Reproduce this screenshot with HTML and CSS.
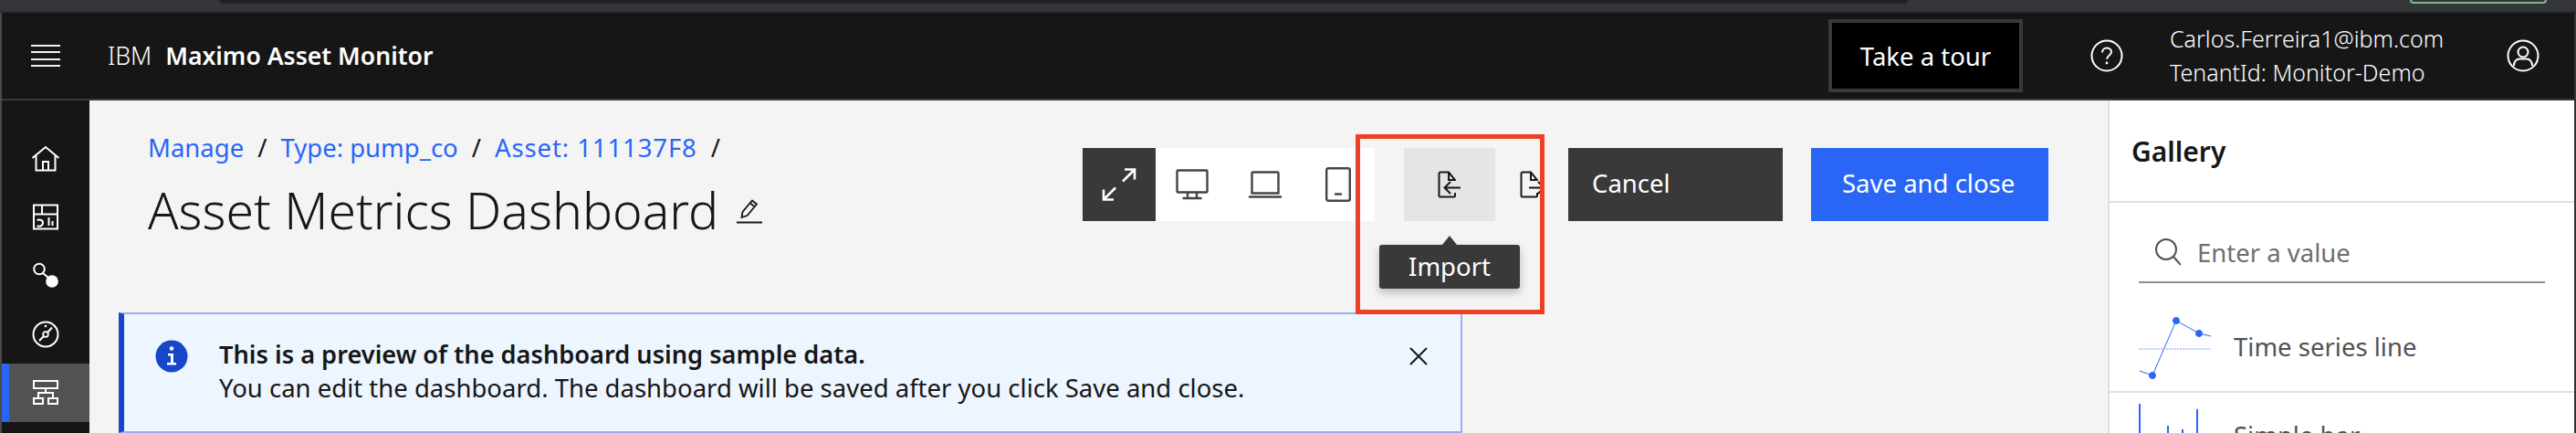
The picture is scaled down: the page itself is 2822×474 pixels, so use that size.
FILE: index.html
```html
<!DOCTYPE html>
<html lang="en">
<head>
    <meta charset="UTF-8">
    <title>Asset Metrics Dashboard</title>
    <link rel="stylesheet" href="styles.css">
</head>
<body>
    <div class="browser-strip">
        <div class="browser-tab"></div>
        <div class="browser-pill"></div>
    </div>
    <div class="app">
        <header class="top-bar">
            <div class="hamburger"><span></span><span></span><span></span><span></span></div>
            <div class="brand">IBM <b>Maximo Asset Monitor</b></div>
            <button class="tour-btn">Take a tour</button>
            <svg class="help-icon" width="36" height="36" viewBox="0 0 36 36" fill="none" stroke="#fff" stroke-width="2">
                <circle cx="18" cy="18" r="16.5"/>
                <path d="M13 14.5c0-3 2.2-5 5-5s5 2 5 4.6c0 3.6-5 3.6-5 7.6"/>
                <circle cx="18" cy="26" r="1.4" fill="#fff" stroke="none"/>
            </svg>
            <div class="user-info">
                <div>Carlos.Ferreira1@ibm.com</div>
                <div>TenantId: Monitor-Demo</div>
            </div>
            <svg class="user-icon" width="36" height="36" viewBox="0 0 36 36" fill="none" stroke="#fff" stroke-width="2">
                <circle cx="18" cy="18" r="16.5"/>
                <circle cx="18" cy="14" r="5.5"/>
                <path d="M8 29c0-5 3-7.5 6-7.5h8c3 0 6 2.5 6 7.5"/>
            </svg>
        </header>
        <div class="workspace">
            <nav class="side-nav">
                <div class="nav-item">
                    <svg width="32" height="32" viewBox="0 0 32 32" fill="none" stroke="#fff" stroke-width="2">
                        <path d="M1.5 15L16 3l14.5 12M5.5 12v16.5h21V12M13 28.5V19h6v9.5"/>
                    </svg>
                </div>
                <div class="nav-item">
                    <svg width="32" height="32" viewBox="0 0 32 32" fill="none" stroke="#fff" stroke-width="2">
                        <path d="M3 2.5h26v26H3zM3 12.5h26M12 2.5v10M6.5 19c4-1.500 7 .5 6.5 3.5s-4 4-6.5 2.5M19.5 16v9M23.5 20v5"/>
                    </svg>
                </div>
                <div class="nav-item">
                    <svg width="32" height="32" viewBox="0 0 32 32" fill="none" stroke="#fff" stroke-width="2">
                        <circle cx="9" cy="8.5" r="5.8"/>
                        <path d="M13 13l6 5"/>
                        <circle cx="23" cy="22" r="6.8" fill="#fff" stroke="none"/>
                    </svg>
                </div>
                <div class="nav-item">
                    <svg width="32" height="32" viewBox="0 0 32 32" fill="none" stroke="#fff" stroke-width="2">
                        <circle cx="16" cy="16" r="13.5"/>
                        <path d="M9 23l5-5M18 14l5-5.5"/>
                        <circle cx="16" cy="16" r="2.8" fill="none" stroke-width="1.8"/>
                        <circle cx="16" cy="7" r="1.3" fill="#fff" stroke="none"/>
                    </svg>
                </div>
                <div class="nav-item active">
                    <svg width="32" height="32" viewBox="0 0 32 32" fill="none" stroke="#fff" stroke-width="2">
                        <path d="M3 3h26v8H3zM16 11v5M8 21v-5h16v5M3 22h10v6H3zM19 22h10v6H19z"/>
                    </svg>
                </div>
            </nav>
            <main class="content">
                <div class="page-head">
                    <div class="title-block">
                        <div class="breadcrumb">
                            <a>Manage</a><span>/</span><a>Type: pump_co</a><span>/</span><a class="crumb-id">Asset: 111137F8</a><span>/</span>
                        </div>
                        <h1>Asset Metrics Dashboard
                            <svg class="edit-icon" width="28" height="28" viewBox="0 0 28 28" fill="none" stroke="#161616" stroke-width="1.8">
                                <path d="M0 26.5h28M5.5 21l1-6L17 2.5l5 4-10.5 12.5zM15 5.5l5 4"/>
                            </svg>
                        </h1>
                    </div>
                    <div class="toolbar">
                        <button class="tool-btn tool-dark">
                            <svg width="38" height="38" viewBox="0 0 38 38" fill="none" stroke="#fff" stroke-width="2.6">
                                <path d="M25 2.5h11v11M36 2.5L23 15.5M13 35.5H2v-11M2 35.5l13-13"/>
                            </svg>
                        </button>
                        <div class="view-group">
                            <button class="tool-btn">
                                <svg width="36" height="34" viewBox="0 0 36 34" fill="none" stroke="#444" stroke-width="2.4">
                                    <path d="M2.5 1.500h31a1 1 0 0 1 1 1v22a1 1 0 0 1-1 1h-31a1 1 0 0 1-1-1v-22a1 1 0 0 1 1-1zM13 25.5v6M23 25.5v6M7.500 32h21"/>
                                </svg>
                            </button>
                            <button class="tool-btn">
                                <svg width="36" height="30" viewBox="0 0 36 30" fill="none" stroke="#444" stroke-width="2.4">
                                    <path d="M4.5 1.5h27a1 1 0 0 1 1 1v22h-29v-22a1 1 0 0 1 1-1zM0 28.5h36"/>
                                </svg>
                            </button>
                            <button class="tool-btn">
                                <svg width="28" height="38" viewBox="0 0 28 38" fill="none" stroke="#444" stroke-width="2.4">
                                    <rect x="1.2" y="1.2" width="25.6" height="35.6" rx="2"/>
                                    <path d="M10 29.5h8"/>
                                </svg>
                            </button>
                        </div>
                        <div class="import-wrap">
                            <button class="tool-btn tool-ghost tool-hover">
                                <svg width="26" height="30" viewBox="0 0 26 30" fill="none" stroke="#161616" stroke-width="2">
                                    <path d="M19 11V10L12 1.5H3a1.5 1.5 0 0 0-1.5 1.5v24A1.5 1.5 0 0 0 3 28.5h15a1 1 0 0 0 1-1V24M12 1.5V10h7M25 18.5H8M14 12l-6.5 6.5L14 25"/>
                                </svg>
                            </button>
                            <div class="tooltip">Import</div>
                            <div class="callout"></div>
                        </div>
                        <button class="tool-btn tool-ghost export-btn">
                            <svg width="26" height="30" viewBox="0 0 26 30" fill="none" stroke="#161616" stroke-width="2">
                                <path d="M19 11V10L12 1.5H3a1.5 1.5 0 0 0-1.5 1.5v24A1.5 1.5 0 0 0 3 28.5h15a1 1 0 0 0 1-1V24M12 1.5V10h7M10 18.5h16M20 12l6.5 6.5L20 25"/>
                            </svg>
                        </button>
                        <button class="action-btn cancel-btn">Cancel</button>
                        <button class="action-btn save-btn">Save and close</button>
                    </div>
                </div>
                <div class="notice">
                    <svg class="notice-icon" width="36" height="36" viewBox="0 0 36 36">
                        <circle cx="18" cy="18" r="17.5" fill="#1846c8"/>
                        <circle cx="18" cy="9.5" r="2.2" fill="#fff"/>
                        <path d="M14 15h6v10h3v2.5H13V25h4v-7.5h-3z" fill="#fff"/>
                    </svg>
                    <div class="notice-text">
                        <b>This is a preview of the dashboard using sample data.</b>
                        <div>You can edit the dashboard. The dashboard will be saved after you click Save and close.</div>
                    </div>
                    <svg class="notice-close" width="20" height="20" viewBox="0 0 20 20" fill="none" stroke="#161616" stroke-width="2">
                        <path d="M1 1l18 18M19 1L1 19"/>
                    </svg>
                </div>
            </main>
            <aside class="gallery">
                <h2>Gallery</h2>
                <div class="search-row">
                    <svg width="28" height="30" viewBox="0 0 28 30" fill="none" stroke="#525252" stroke-width="2">
                        <circle cx="12" cy="12" r="11"/>
                        <path d="M20 20l8 9"/>
                    </svg>
                    <span>Enter a value</span>
                </div>
                <div class="gallery-item">
                    <svg width="80" height="70" viewBox="0 0 80 70" fill="none" stroke="#2a66f6" stroke-width="1">
                        <path d="M0 37h79" stroke="#bcd0fb" stroke-width="2" stroke-dasharray="2 1"/>
                        <path d="M1 61l14 5L41 6l25 14 13 3"/>
                        <circle cx="15" cy="66" r="3.5" fill="#2a66f6"/>
                        <circle cx="41" cy="6" r="3.5" fill="#2a66f6"/>
                        <circle cx="66" cy="20" r="3.5" fill="#2a66f6"/>
                    </svg>
                    <span>Time series line</span>
                </div>
                <div class="gallery-item item-bar">
                    <svg width="80" height="70" viewBox="0 0 80 70" fill="none" stroke="#2a66f6" stroke-width="2">
                        <path d="M1 0v70M32 24v46M48 28v42M64 6v64"/>
                    </svg>
                    <span>Simple bar</span>
                </div>
            </aside>
        </div>
    </div>
</body>
</html>
```

FILE: styles.css
```css
* {
    box-sizing: border-box;
}
html, body {
    margin: 0;
    height: 474px;
    overflow: hidden;
}
body {
    font-family: "Noto Sans", Arial, sans-serif;
    font-size: 27.5px;
    background-color: #161616;
    color: #161616;
}
button {
    font-family: inherit;
    font-size: inherit;
    border: none;
    padding: 0;
    cursor: pointer;
}

.browser-strip {
    height: 14px;
    background-color: #35363a;
    border-bottom: 2px solid #2b2c30;
    display: flex;
    justify-content: space-between;
}
.browser-tab {
    width: 1850px;
    height: 4px;
    margin-left: 240px;
    background-color: #202124;
    border-bottom-left-radius: 8px;
    border-bottom-right-radius: 8px;
}
.browser-pill {
    width: 150px;
    height: 4px;
    margin-right: 32px;
    border: 2px solid #7fb98a;
    border-top: none;
    border-bottom-left-radius: 8px;
    border-bottom-right-radius: 8px;
}

.app {
    height: 460px;
    border-left: 2px solid #4a4a4a;
    border-right: 2px solid #333;
    display: flex;
    flex-direction: column;
}

.top-bar {
    height: 96px;
    flex: none;
    background-color: #161616;
    border-bottom: 2px solid #393939;
    color: #fff;
    display: flex;
    align-items: center;
}
.hamburger {
    width: 32px;
    flex: none;
    margin-left: 32px;
    display: flex;
    flex-direction: column;
    gap: 5.33px;
}
.hamburger span {
    height: 2px;
    background-color: #f0f0f0;
}
.brand {
    margin-left: 52px;
    width: 1885px;
    flex: none;
    font-size: 26.6px;
    font-weight: 300;
}
.brand b {
    font-weight: 600;
    margin-left: 8px;
}
.tour-btn {
    width: 213px;
    height: 80px;
    flex: none;
    background-color: #000;
    color: #fff;
    border: 4px solid #393939;
}
.help-icon {
    margin-left: 74px;
    flex: none;
}
.user-info {
    margin-left: 51px;
    width: 369px;
    flex: none;
    font-size: 25px;
    line-height: 37px;
    font-weight: 300;
}
.user-icon {
    flex: none;
}

.workspace {
    flex: 1;
    display: flex;
    min-height: 0;
}

.side-nav {
    width: 96px;
    flex: none;
    padding-top: 32px;
    background-color: #161616;
}
.nav-item {
    height: 64px;
    display: flex;
    align-items: center;
    justify-content: center;
}
.nav-item.active {
    background-color: #525252;
    border-left: 8px solid #2a66f6;
    padding-right: 8px;
}

.content {
    width: 2211px;
    flex: none;
    background-color: #f4f4f4;
    padding-left: 32px;
}
.page-head {
    height: 232px;
    padding: 38px 0 0 32px;
    display: flex;
}
.title-block {
    width: 1024px;
    flex: none;
}
.breadcrumb {
    display: flex;
    gap: 15px;
    line-height: 28px;
}
.breadcrumb a {
    color: #2a66f6;
}
.breadcrumb .crumb-id {
    letter-spacing: 0.9px;
}
h1 {
    margin: 18px 0 0 0;
    font-size: 55.3px;
    font-weight: 300;
    line-height: 72px;
    display: flex;
    align-items: center;
    gap: 20px;
}
.edit-icon {
    margin-top: 2px;
}

.toolbar {
    margin-top: 14px;
    height: 80px;
    display: flex;
}
.tool-btn {
    width: 80px;
    height: 80px;
    background-color: #fff;
    display: flex;
    align-items: center;
    justify-content: center;
}
.tool-dark {
    background-color: #393939;
}
.view-group {
    display: flex;
    background-color: #fff;
}
.tool-ghost {
    background-color: transparent;
}
.tool-hover {
    width: 100px;
    background-color: #e5e5e5;
}
.import-wrap {
    position: relative;
    margin-left: 32px;
}
.export-btn {
    width: 49px;
    justify-content: flex-start;
    padding-left: 27px;
    overflow: hidden;
}
.export-btn svg {
    flex: none;
}
.tooltip {
    position: absolute;
    left: -27px;
    top: 106px;
    width: 154px;
    height: 48px;
    padding-bottom: 2px;
    background-color: #393939;
    color: #fff;
    border-radius: 3px;
    box-shadow: 0 4px 10px rgba(0, 0, 0, 0.25);
    display: flex;
    align-items: center;
    justify-content: center;
    z-index: 2;
}
.tooltip::before {
    content: "";
    position: absolute;
    left: 69px;
    top: -10px;
    border-left: 8px solid transparent;
    border-right: 8px solid transparent;
    border-bottom: 10px solid #393939;
}
.callout {
    position: absolute;
    left: -53px;
    top: -15px;
    width: 207px;
    height: 197px;
    border: 5px solid #ee4027;
    z-index: 3;
}
.action-btn {
    height: 80px;
    margin-left: 31px;
    color: #fff;
    text-align: left;
    padding: 0 0 3px 26px;
}
.cancel-btn {
    width: 235px;
    background-color: #393939;
}
.save-btn {
    width: 260px;
    background-color: #2a66f6;
    padding-left: 34px;
}

.notice {
    width: 1472px;
    height: 132px;
    background-color: #edf5ff;
    border: 2px solid #97b1ec;
    border-left: 6px solid #1846c8;
    display: flex;
    align-items: flex-start;
    padding: 28px 0 0 34px;
}
.notice-text {
    margin-left: 34px;
    width: 1304px;
    flex: none;
    margin-top: -3px;
    line-height: 37px;
}
.notice-text b {
    font-weight: 600;
    font-size: 27.2px;
}
.notice-close {
    margin-top: 8px;
    flex: none;
}

.gallery {
    flex: 1;
    background-color: #fff;
    border-left: 2px solid #e0e0e0;
}
h2 {
    margin: 0;
    height: 112px;
    padding: 36px 0 0 24px;
    font-size: 30px;
    line-height: 40px;
    font-weight: 600;
    border-bottom: 2px solid #e0e0e0;
}
.search-row {
    margin: 0 32px;
    height: 88px;
    padding: 22px 0 0 18px;
    border-bottom: 2px solid #8d8d8d;
    display: flex;
    align-items: center;
    gap: 18px;
    color: #6f6f6f;
}
.search-row svg {
    flex: none;
}
.gallery-item {
    height: 120px;
    padding: 35px 0 0 32px;
    display: flex;
    gap: 24px;
    color: #525252;
    border-bottom: 2px solid #e0e0e0;
    overflow: hidden;
}
.gallery-item span {
    margin-top: 17px;
    line-height: 36px;
}
.gallery-item svg {
    flex: none;
}
.item-bar {
    padding-top: 12px;
}
```
